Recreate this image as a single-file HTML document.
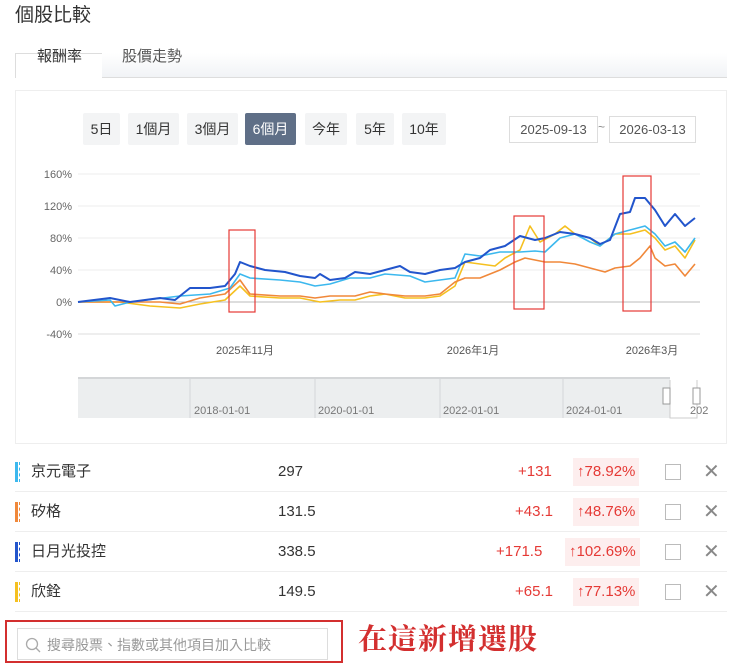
<!DOCTYPE html>
<html><head><meta charset="utf-8"><style>
*{margin:0;padding:0;box-sizing:border-box}
body{width:740px;height:668px;background:#fff;font-family:"Liberation Sans","Noto Sans CJK TC",sans-serif;color:#333;position:relative;overflow:hidden}
.a{position:absolute;line-height:1.2}
.btn{position:absolute;top:113px;height:32px;background:#f3f4f5;font-size:14px;line-height:32px;text-align:center;color:#333;border-radius:2px}
.date{position:absolute;top:116px;height:27px;border:1px solid #ddd;font-size:13px;line-height:25px;text-align:center;color:#555}
.row{position:absolute;left:15px;width:712px;height:40px;border-bottom:1px solid #eee;font-size:15px}
.row span{position:absolute;top:10px;line-height:20px;height:20px}
.bar{position:absolute;left:0;top:10px;width:3px;height:20px}
.bar:after{content:"";position:absolute;left:4px;top:0;width:1px;height:20px;border-left:1px dashed currentColor}
.pct{position:absolute;top:6px;height:28px;background:#fdeeee;color:#e53935;line-height:28px;padding:0 4px;font-size:15px}
.cb{position:absolute;left:650px;top:12px;width:16px;height:16px;border:1px solid #bbb}
.x{position:absolute;left:688px;top:9px;font-size:20px;line-height:22px;color:#888}
</style></head><body>
<div class="a" style="left:15px;top:5px;font-size:19px;line-height:22px;color:#333">個股比較</div>
<div class="a" style="left:15px;top:77px;width:712px;height:1px;background:#ddd"></div>
<div class="a" style="left:15px;top:53px;width:88px;height:25px;border:1px solid #ddd;border-bottom:none;background:#fff"></div>
<div class="a" style="left:102px;top:53px;width:625px;height:24px;background:linear-gradient(#fff,#f1f3f6)"></div>
<div class="a" style="left:37px;top:47px;font-size:15px;line-height:20px;color:#333">報酬率</div>
<div class="a" style="left:122px;top:47px;font-size:15px;line-height:20px;color:#555">股價走勢</div>
<div class="a" style="left:15px;top:90px;width:712px;height:354px;border:1px solid #eee"></div>
<div class="btn" style="left:83px;width:37px">5日</div>
<div class="btn" style="left:128px;width:51px">1個月</div>
<div class="btn" style="left:187px;width:51px">3個月</div>
<div class="btn" style="left:245px;width:51px;background:#5f6f87;color:#fff">6個月</div>
<div class="btn" style="left:305px;width:42px">今年</div>
<div class="btn" style="left:356px;width:38px">5年</div>
<div class="btn" style="left:402px;width:44px">10年</div>
<div class="date" style="left:509px;width:89px">2025-09-13</div>
<div class="a" style="left:598px;top:120px;font-size:12px;color:#888">~</div>
<div class="date" style="left:609px;width:87px">2026-03-13</div>
<svg class="a" style="left:0;top:0" width="740" height="450">
<g font-size="11" fill="#666" text-anchor="end" font-family="Liberation Sans">
<text x="72" y="178">160%</text><text x="72" y="210">120%</text><text x="72" y="242">80%</text><text x="72" y="274">40%</text><text x="72" y="306">0%</text><text x="72" y="338">-40%</text></g>
<g stroke="#eee"><line x1="78" x2="700" y1="174" y2="174"/><line x1="78" x2="700" y1="206" y2="206"/><line x1="78" x2="700" y1="238" y2="238"/><line x1="78" x2="700" y1="270" y2="270"/></g>
<line x1="78" x2="700" y1="302" y2="302" stroke="#bbb"/>
<line x1="78" x2="700" y1="334" y2="334" stroke="#ddd"/>
<g font-size="11" fill="#555" text-anchor="middle" font-family="Liberation Sans,Noto Sans CJK TC"><text x="245" y="354">2025年11月</text><text x="473" y="354">2026年1月</text><text x="652" y="354">2026年3月</text></g>
<g fill="none" stroke-width="1.6" stroke-linejoin="round">
<polyline stroke="#f5c020" points="78,302 120,302 150,306 180,308 200,304 225,300 240,286 250,296 280,298 300,298 320,302 340,300 355,300 370,296 385,294 405,298 425,298 440,296 455,286 465,262 480,264 495,266 505,258 520,250 530,226 540,242 555,234 565,226 575,234 590,238 600,246 615,234 630,234 645,230 655,238 665,250 675,246 685,258 695,240"/>
<polyline stroke="#f0883a" points="78,302 120,302 160,302 180,304 200,298 225,294 240,280 250,294 280,296 300,296 315,298 330,296 355,296 370,292 385,294 405,296 425,296 440,294 455,282 465,278 480,278 500,270 515,262 525,258 545,262 560,262 575,264 590,268 605,272 615,268 630,266 640,258 650,246 655,258 665,266 675,264 685,276 695,264"/>
<polyline stroke="#3cb8ee" points="78,302 110,300 115,306 130,302 180,296 210,294 230,288 240,274 250,278 280,280 300,282 315,286 330,284 350,278 370,278 385,274 410,276 425,282 440,280 455,278 465,254 480,256 500,252 520,252 535,251 545,252 560,238 575,234 590,242 600,246 615,234 630,230 645,226 655,234 665,246 675,242 685,252 695,238"/>
<polyline stroke="#2255cc" stroke-width="2" points="78,302 110,298 130,302 160,298 175,300 190,288 210,288 225,286 235,274 240,262 250,266 265,270 285,272 300,276 315,278 320,274 330,280 345,278 355,272 370,274 385,270 400,266 410,272 425,274 440,270 455,268 465,262 480,258 490,250 505,246 520,236 535,240 545,238 560,232 575,234 590,238 600,244 610,240 620,214 630,212 635,198 645,198 655,210 665,226 675,214 685,226 695,218"/>
</g>
<g fill="none" stroke="#e53935" stroke-width="1.2"><rect x="229" y="230" width="26" height="82"/><rect x="514" y="216" width="30" height="93"/><rect x="623" y="176" width="28" height="135"/></g>
<rect x="78" y="378" width="592" height="40" fill="#eceeef"/>
<g stroke="#d4d6d8"><line x1="78" x2="670" y1="378" y2="378" stroke-width="2"/><line x1="190" x2="190" y1="378" y2="418"/><line x1="315" x2="315" y1="378" y2="418"/><line x1="440" x2="440" y1="378" y2="418"/><line x1="563" x2="563" y1="378" y2="418"/></g>
<polyline points="670,380 670,418 697,418 697,380" fill="none" stroke="#ccc"/>
<rect x="663" y="388" width="7" height="16" fill="#fff" stroke="#999"/><rect x="693" y="388" width="7" height="16" fill="#fff" stroke="#999"/>
<g font-size="11" fill="#777" font-family="Liberation Sans"><text x="194" y="414">2018-01-01</text><text x="318" y="414">2020-01-01</text><text x="443" y="414">2022-01-01</text><text x="566" y="414">2024-01-01</text><text x="690" y="414">202</text></g>
</svg>
<div class="row" style="top:452px"><div class="bar" style="background:#3cb8ee;color:#3cb8ee"></div><span style="left:16px">京元電子</span><span style="left:263px">297</span><span style="left:503px;color:#e53935">+131</span><div class="pct" style="left:558px">↑78.92%</div><div class="cb"></div><div class="x">✕</div></div>
<div class="row" style="top:492px"><div class="bar" style="background:#f0883a;color:#f0883a"></div><span style="left:16px">矽格</span><span style="left:263px">131.5</span><span style="left:500px;color:#e53935">+43.1</span><div class="pct" style="left:558px">↑48.76%</div><div class="cb"></div><div class="x">✕</div></div>
<div class="row" style="top:532px"><div class="bar" style="background:#2255cc;color:#2255cc"></div><span style="left:16px">日月光投控</span><span style="left:263px">338.5</span><span style="left:481px;color:#e53935">+171.5</span><div class="pct" style="left:550px">↑102.69%</div><div class="cb"></div><div class="x">✕</div></div>
<div class="row" style="top:572px"><div class="bar" style="background:#f5c020;color:#f5c020"></div><span style="left:16px">欣銓</span><span style="left:263px">149.5</span><span style="left:500px;color:#e53935">+65.1</span><div class="pct" style="left:558px">↑77.13%</div><div class="cb"></div><div class="x">✕</div></div>
<div class="a" style="left:5px;top:620px;width:338px;height:43px;border:2px solid #d32f2f"></div>
<div class="a" style="left:17px;top:628px;width:311px;height:32px;border:1px solid #ddd"></div>
<svg class="a" style="left:25px;top:637px" width="16" height="16"><circle cx="7" cy="7" r="5.5" fill="none" stroke="#aaa" stroke-width="1.3"/><line x1="11" y1="11" x2="15" y2="15" stroke="#aaa" stroke-width="1.3"/></svg>
<div class="a" style="left:47px;top:636px;font-size:14px;line-height:18px;color:#999">搜尋股票、指數或其他項目加入比較</div>
<div class="a" style="left:358px;top:620px;font-size:29px;line-height:36px;color:#d32f2f;font-family:'Noto Serif CJK SC',serif;font-weight:bold;letter-spacing:1px">在這新增選股</div>
</body></html>
